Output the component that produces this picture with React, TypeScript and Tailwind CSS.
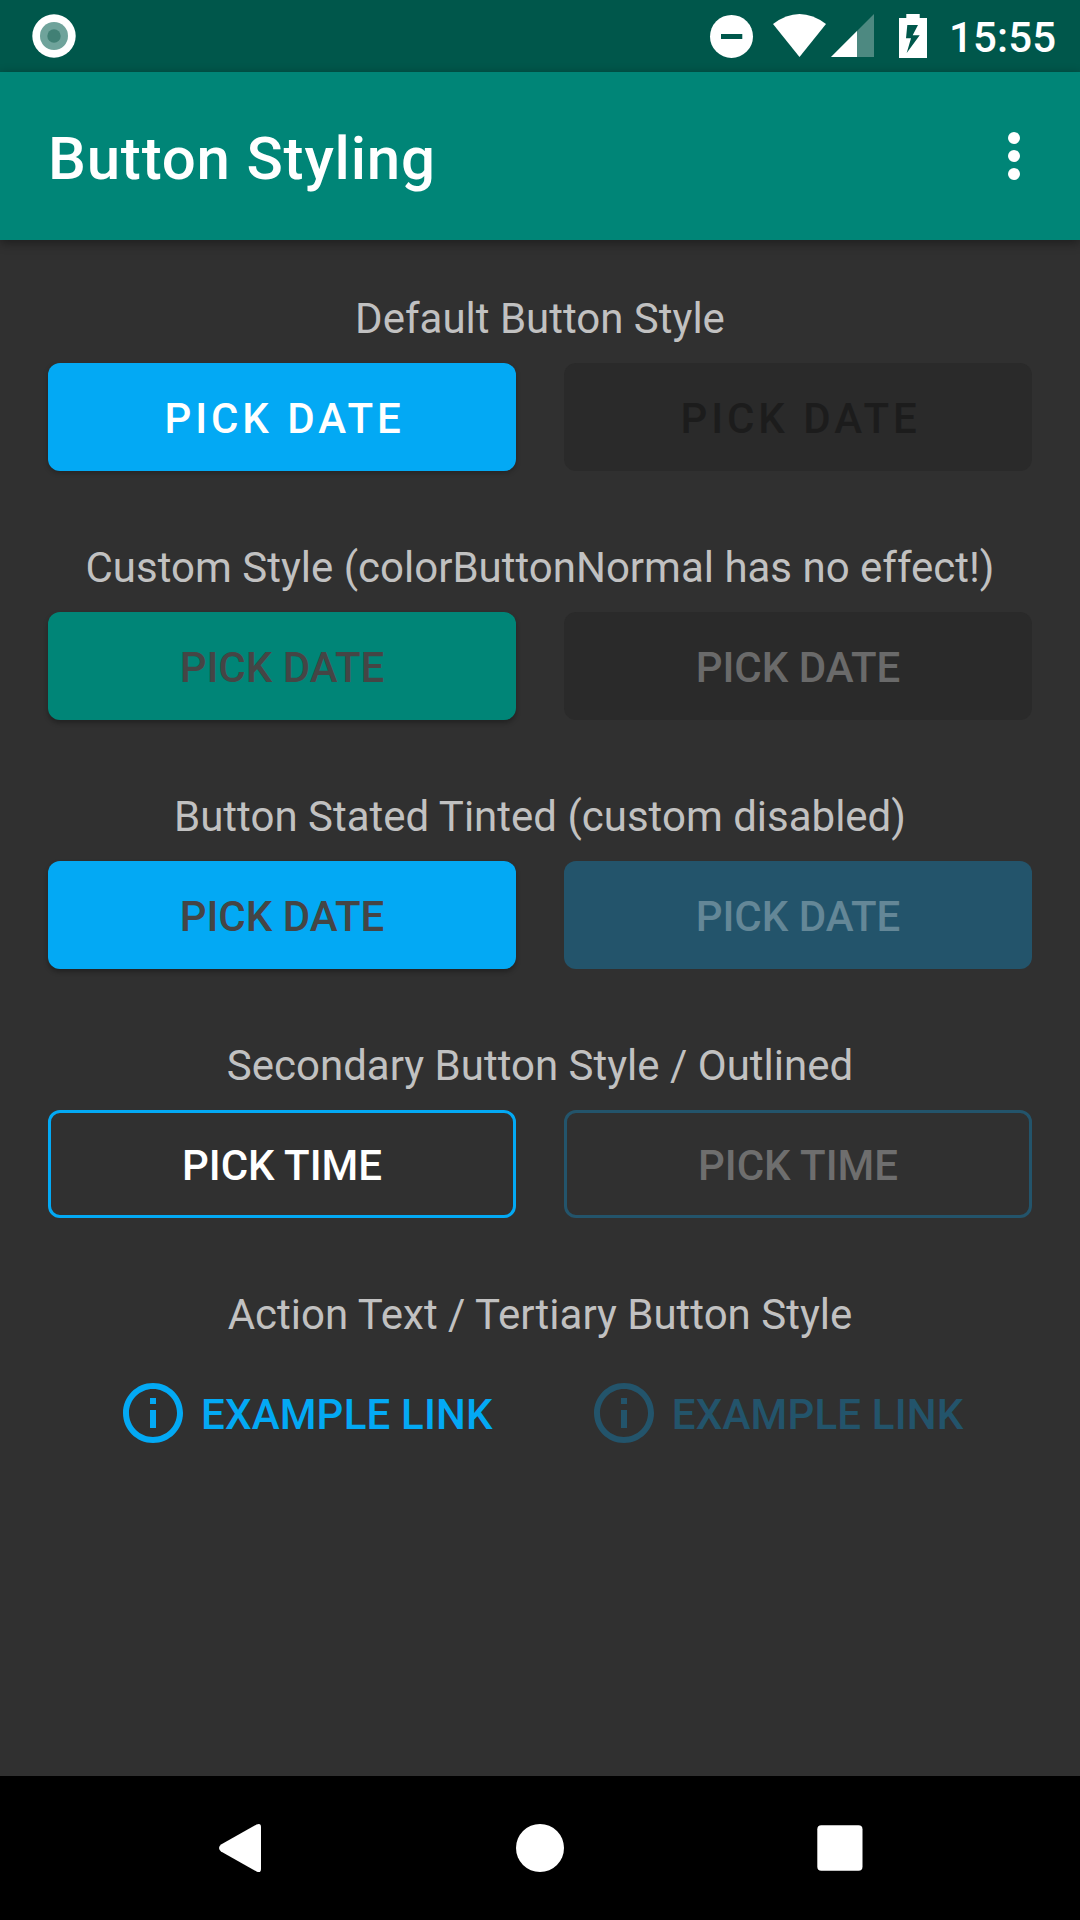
import React from "react";

type ButtonProps = { label: string; className: string };

function Button({ label, className }: ButtonProps) {
  return (
    <button className={`flex h-[108px] flex-1 items-center justify-center rounded-[12px] pt-[2px] text-[42px] font-medium ${className}`}>
      {label}
    </button>
  );
}

function Section({ title, children }: { title: string; children: React.ReactNode }) {
  return (
    <section className="flex h-[249px] flex-col">
      <h2 className="flex h-[75px] items-center justify-center pb-[14px] text-[42px] leading-[49px] whitespace-nowrap text-[#c1c1c1]">{title}</h2>
      <div className="flex gap-12">{children}</div>
    </section>
  );
}

function Link({ className }: { className: string }) {
  return (
    <button className={`flex items-center text-[42px] font-medium tracking-[0.2px] whitespace-nowrap ${className}`}>
      <svg className="mr-[12px] size-[72px]" viewBox="0 0 24 24" fill="currentColor">
        <path d="M11 7h2v2h-2zm0 4h2v6h-2zm1-9C6.48 2 2 6.48 2 12s4.48 10 10 10 10-4.48 10-10S17.52 2 12 2zm0 18c-4.41 0-8-3.59-8-8s3.59-8 8-8 8 3.59 8 8-3.59 8-8 8z" />
      </svg>
      <span className="pt-[2px]">EXAMPLE LINK</span>
    </button>
  );
}

export default function App() {
  return (
    <div className="flex h-[1920px] w-[1080px] flex-col overflow-hidden bg-[#303030] font-['Roboto',sans-serif]">
      <header className="flex h-[72px] shrink-0 items-center bg-[#00574b] pl-[32px] text-white">
        <svg className="size-[44px] shrink-0" viewBox="0 0 44 44">
          <circle cx="22" cy="22" r="21.7" fill="#fff" />
          <circle cx="22" cy="22" r="14" fill="#6fa39b" />
          <circle cx="22" cy="22" r="6.7" fill="#418075" />
        </svg>
        <svg className="ml-[624px] h-[72px] w-[240px] shrink-0" viewBox="700 0 240 72" fill="#fff">
          <circle cx="731.5" cy="36.4" r="21.5" />
          <path d="M721 34h21.3v5H721z" fill="#00574b" />
          <path d="M773 24Q799.5 4 826 24L799.5 57Z" />
          <path d="M874 14V57H831Z" opacity=".3" />
          <path d="M857 31V57H831Z" />
          <path d="M906.3 14h13.4v4H927v40h-28V18h7.3z" />
          <path d="M907.3 25H918L912.7 35.2H919.7L906.7 53L911 38.3H906Z" fill="#00574b" />
        </svg>
        <span className="ml-[9px] pt-[2px] text-[42px] font-medium tracking-[0.15px]">15:55</span>
      </header>
      <div className="z-10 flex h-[168px] shrink-0 items-center justify-between bg-[#008577] pr-[57px] pl-[48px] text-white shadow-[0_3px_10px_rgba(0,0,0,.4)]">
        <h1 className="pt-[6px] text-[60px] font-medium tracking-[0.8px]">Button Styling</h1>
        <svg className="h-[50px] w-[18px]" viewBox="0 0 18 50" fill="currentColor">
          <circle cx="9" cy="7" r="6" /><circle cx="9" cy="25" r="6" /><circle cx="9" cy="43" r="6" />
        </svg>
      </div>
      <main className="flex flex-1 flex-col px-12 pt-[48px]">
        <Section title="Default Button Style">
          <Button label="PICK DATE" className="bg-[#03a9f4] pl-[5px] tracking-[3.95px] text-white shadow-[0_2px_5px_rgba(0,0,0,.25)]" />
          <Button label="PICK DATE" className="bg-[#2a2a2a] pl-[5px] tracking-[3.95px] text-[#1c1c1c]" />
        </Section>
        <Section title="Custom Style (colorButtonNormal has no effect!)">
          <Button label="PICK DATE" className="bg-[#008577] text-[#454545] shadow-[0_3px_5px_rgba(0,0,0,.3)]" />
          <Button label="PICK DATE" className="bg-[#2a2a2a] text-[#6a6a6a]" />
        </Section>
        <Section title="Button Stated Tinted (custom disabled)">
          <Button label="PICK DATE" className="bg-[#03a9f4] text-[#454545] shadow-[0_3px_5px_rgba(0,0,0,.3)]" />
          <Button label="PICK DATE" className="bg-[#23546b] text-[#648797]" />
        </Section>
        <Section title="Secondary Button Style / Outlined">
          <Button label="PICK TIME" className="border-3 border-[#03a9f4] text-white" />
          <Button label="PICK TIME" className="border-3 border-[#23546b] text-[#6e6e6e]" />
        </Section>
        <Section title="Action Text / Tertiary Button Style">
          <div className="flex h-[108px] w-full items-center gap-[95px] pl-[69px]">
            <Link className="text-[#03a9f4]" />
            <Link className="text-[#23546b]" />
          </div>
        </Section>
      </main>
      <nav className="flex h-[144px] shrink-0 items-center justify-center bg-black">
        <svg className="h-[144px] w-[720px]" viewBox="180 0 720 144" fill="#fff">
          <path d="M261 51V93Q261 97.5 256.500 95.500L221 75.500Q217 72 221 68.500L256.500 48.500Q261 46.500 261 51Z" />
          <circle cx="540" cy="72" r="24" />
          <rect x="817.3" y="49.2" width="45.2" height="45.6" rx="4" />
        </svg>
      </nav>
    </div>
  );
}
